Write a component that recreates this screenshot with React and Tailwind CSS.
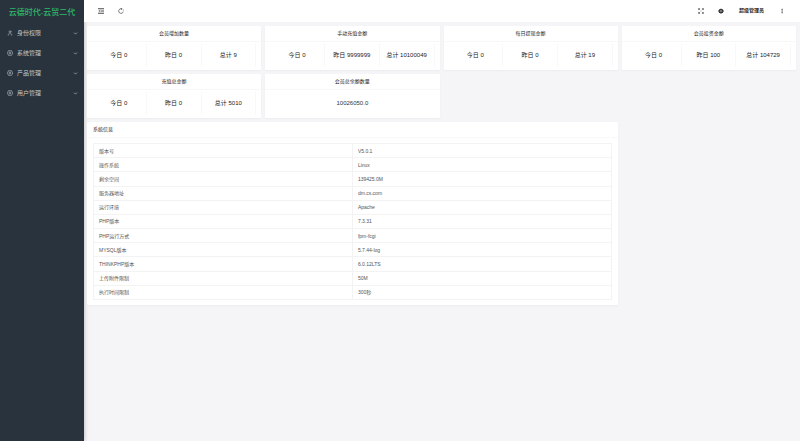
import { useState } from 'react';
import { User, ChevronDown, EllipsisVertical } from 'lucide-react';

const menus = [
  { label: '身份权限', icon: 'user' },
  { label: '系统管理', icon: 'gear' },
  { label: '产品管理', icon: 'gear' },
  { label: '用户管理', icon: 'gear' },
];

const cards = [
  { title: '会员增加数量', values: ['今日 0', '昨日 0', '总计 9'] },
  { title: '手动充值金额', values: ['今日 0', '昨日 9999999', '总计 10100049'] },
  { title: '每日提现金额', values: ['今日 0', '昨日 0', '总计 19'] },
  { title: '会员投资金额', values: ['今日 0', '昨日 100', '总计 104729'] },
  { title: '充值总金额', values: ['今日 0', '昨日 0', '总计 5010'] },
  { title: '会员总余额数量', values: ['10026050.0'] },
];

const systemInfo = [
  ['版本号', 'V5.0.1'],
  ['操作系统', 'Linux'],
  ['剩余空间', '139425.0M'],
  ['服务器地址', 'dm.cs.com'],
  ['运行环境', 'Apache'],
  ['PHP版本', '7.3.31'],
  ['PHP运行方式', 'fpm-fcgi'],
  ['MYSQL版本', '5.7.44-log'],
  ['THINKPHP版本', '6.0.12LTS'],
  ['上传附件限制', '50M'],
  ['执行时间限制', '300秒'],
];

function GearIcon() {
  return (
    <svg viewBox="0 0 16 16" className="w-[6px] h-[6px]" fill="none" stroke="currentColor" strokeWidth="1.6">
      <path d="M8 1l2 1.2 2.4-.2.8 2.2L15 6l-.6 2 .6 2-1.8 1.8-.8 2.2-2.4-.2L8 15l-2-1.2-2.4.2-.8-2.2L1 10l.6-2L1 6l1.8-1.8.8-2.2L6 2.2z" />
      <circle cx="8" cy="8" r="2.6" />
    </svg>
  );
}

function CollapseIcon() {
  return (
    <svg viewBox="0 0 12 12" className="w-[6px] h-[6px]" fill="none" stroke="currentColor" strokeWidth="1.8">
      <path d="M0 1.5h12M5 6h7M0 10.5h12" />
      <path d="M3.5 4L1 6l2.5 2z" fill="currentColor" stroke="none" />
    </svg>
  );
}

function RefreshIcon() {
  return (
    <svg viewBox="0 0 16 16" className="w-[6px] h-[6px]" fill="none" stroke="currentColor" strokeWidth="1.6">
      <path d="M10 2.2A6.2 6.2 0 1 0 14 9.5" />
      <path d="M7.5 0l3.5 2.4L8.5 5.500M14.500 4.500v2" />
    </svg>
  );
}

function FullscreenIcon() {
  return (
    <svg viewBox="0 0 16 16" className="w-[6px] h-[6px]" fill="none" stroke="currentColor" strokeWidth="1.5">
      <path d="M1.500 5.500v-4h4M10.500 1.500h4v4M14.500 10.500v4h-4M5.500 14.500h-4v-4" />
      <path d="M2 2l4 4M14 2l-4 4M14 14l-4-4M2 14l4-4" />
    </svg>
  );
}

function ThemeIcon() {
  return (
    <svg viewBox="0 0 16 16" className="w-[6px] h-[6px]" fill="currentColor">
      <path d="M8 1l3 2h2l1 3 2 2-2 2-1 3h-2l-3 2-3-2H3l-1-3-2-2 2-2 1-3h2z" />
      <path d="M5 6.500h6M5 9.500h6" stroke="white" strokeWidth="1" />
    </svg>
  );
}

function Sidebar() {
  const [active, setActive] = useState(null);

  return (
    <aside className="w-[84px] shrink-0 bg-[#28333e] text-[#c4c9cd] shadow-[0_0_4px_rgba(0,0,0,0.3)]">
      <h1 className="h-[23px] pt-1 text-center text-[8px] leading-[18px] font-medium text-[#2fb968] whitespace-nowrap">
        云德时代-云贸二代
      </h1>
      <nav>
        {menus.map((menu) => (
          <button
            key={menu.label}
            onClick={() => setActive(active === menu.label ? null : menu.label)}
            className="flex w-full h-5 items-center pl-[7px] pr-[6px] text-[6px]"
          >
            {menu.icon === 'user' ? <User className="w-[6px] h-[6px]" /> : <GearIcon />}
            <span className="ml-1 flex-1 text-left">{menu.label}</span>
            <ChevronDown className="w-[5px] h-[5px]" strokeWidth={3} />
          </button>
        ))}
      </nav>
    </aside>
  );
}

function Header() {
  return (
    <header className="flex h-[22px] items-center bg-white pl-[14px] pr-[15px] text-[#333]">
      <button aria-label="menu"><CollapseIcon /></button>
      <button aria-label="refresh" className="ml-[14px]"><RefreshIcon /></button>
      <div className="ml-auto flex items-center">
        <button aria-label="fullscreen"><FullscreenIcon /></button>
        <button aria-label="theme" className="ml-[14px]"><ThemeIcon /></button>
        <button className="ml-[15px] text-[5px] font-medium text-black">超级管理员</button>
        <button aria-label="more" className="ml-[15px]"><EllipsisVertical className="w-[6px] h-[6px]" /></button>
      </div>
    </header>
  );
}

function StatCard({ title, values }) {
  return (
    <section className="bg-white rounded-[1px] shadow-[0_1px_2px_rgba(0,0,0,0.04)]">
      <h2 className="h-4 border-b border-[#f8f8f8] text-center text-[5px] leading-[15px] text-[#222]">{title}</h2>
      {values.length > 1 ? (
        <div className="grid grid-cols-3 px-[5px] pt-[2px] pb-[3px]">
          {values.map((value) => (
            <p key={value} className="border-r border-[#f8f8f8] text-center text-[6px] leading-[23px] text-[#222] whitespace-nowrap">
              {value}
            </p>
          ))}
        </div>
      ) : (
        <p className="pt-[2px] pb-[3px] text-center text-[6px] leading-[23px] text-[#333]">{values[0]}</p>
      )}
    </section>
  );
}

function SystemInfo() {
  return (
    <section className="col-span-3 bg-white rounded-[1px] shadow-[0_1px_2px_rgba(0,0,0,0.04)]">
      <h2 className="h-4 border-b border-[#f8f8f8] px-[6px] text-[5px] leading-[15px] text-[#222]">系统信息</h2>
      <div className="px-[6px] py-[5px]">
        <table className="h-[157px] w-full table-fixed border-collapse text-[5px] text-[#555]">
          <tbody>
            {systemInfo.map(([name, value]) => (
              <tr key={name}>
                <td className="border border-[#f3f3f3] px-[5px] leading-[12px]">{name}</td>
                <td className="border border-[#f3f3f3] px-[5px] leading-[12px]">{value}</td>
              </tr>
            ))}
          </tbody>
        </table>
      </div>
    </section>
  );
}

function App() {
  return (
    <div className="flex min-h-screen bg-[#f5f5f7] font-['Liberation_Sans','Noto_Sans_CJK_SC',sans-serif]">
      <Sidebar />
      <div className="flex-1 min-w-0">
        <Header />
        <main className="grid grid-cols-4 gap-1 pl-[3px] pr-1 pt-1">
          {cards.map((card) => (
            <StatCard key={card.title} title={card.title} values={card.values} />
          ))}
          <SystemInfo />
        </main>
      </div>
    </div>
  );
}

export default App;
